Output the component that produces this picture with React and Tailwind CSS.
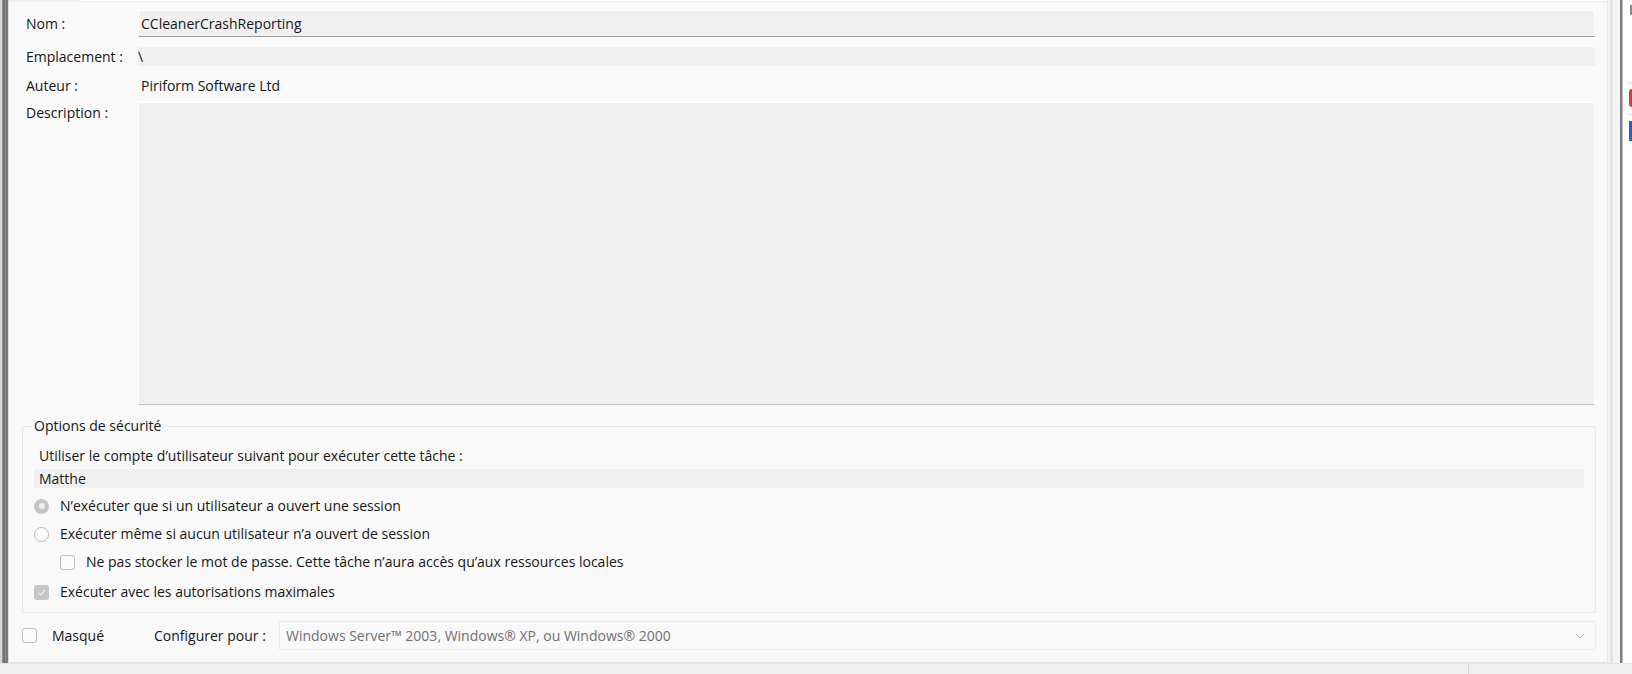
import React from 'react';

function Field({ children, className = '' }) {
  return (
    <div className={`flex items-center bg-[#f0f0f0] ${className}`}>{children}</div>
  );
}

function Radio({ checked }) {
  if (checked) {
    return (
      <span className="flex h-[15px] w-[15px] shrink-0 items-center justify-center rounded-full bg-[#c5c5c5]">
        <span className="h-[6px] w-[6px] rounded-full bg-[#efefef]" />
      </span>
    );
  }
  return <span className="h-[15px] w-[15px] shrink-0 rounded-full border border-[#b9b9b9] bg-[#fbfbfb]" />;
}

function Check({ checked }) {
  if (checked) {
    return (
      <span className="flex h-[15px] w-[15px] shrink-0 items-center justify-center rounded-[3px] bg-[#c6c6c6]">
        <svg width="9" height="9" viewBox="0 0 10 10" fill="none">
          <path d="M1.5 5.2 L4 7.6 L8.6 2.6" stroke="#eeeeee" strokeWidth="1.2" strokeLinecap="round" strokeLinejoin="round" />
        </svg>
      </span>
    );
  }
  return <span className="h-[15px] w-[15px] shrink-0 rounded-[3px] border border-[#bdbdbd] bg-[#fbfbfb]" />;
}

export default function App() {
  return (
    <div className="flex h-[674px] w-[1632px] flex-col overflow-hidden bg-[#f0f0f0] font-['Open_Sans','Noto_Sans',sans-serif] text-[14px] leading-[20px] text-[#161616]">
      <div className="flex h-[663px]">
        {/* left window edge */}
        <div className="flex w-[9px] shrink-0">
          <div className="w-[2px] bg-[#d4d4d4]" />
          <div className="w-[1px] bg-[#9a9a9a]" />
          <div className="w-[2px] bg-[#6f6f6f]" />
          <div className="w-[1px] bg-[#8c8c8c]" />
          <div className="w-[2px] bg-[#767676]" />
          <div className="w-[1px] bg-[#dcdcdc]" />
        </div>

        {/* general tab */}
        <div className="flex w-[1598px] shrink-0 flex-col border-b border-[#e2e2e2] bg-[#f9f9f9]">
          <div className="flex h-[2px]">
            <div className="w-[71px] bg-[#f1f1f1]" />
            <div className="flex-1 border-b border-[#ececec] bg-[#fdfdfd]" />
          </div>

          <div className="flex flex-col pl-[17px] pr-[12px]">
            <div className="mt-[8px] flex h-[27px] items-center">
              <span className="w-[112px] shrink-0">Nom :</span>
              <Field className="h-[27px] flex-1 border border-b-[#9a9a9a] border-x-white border-t-white pl-[2px]">
                CCleanerCrashReporting
              </Field>
            </div>
            <div className="mt-[10px] flex h-[19px] items-center">
              <span className="w-[112px] shrink-0">Emplacement :</span>
              <Field className="h-[19px] flex-1">\</Field>
            </div>
            <div className="mt-[10px] flex h-[20px] items-center">
              <span className="w-[115px] shrink-0">Auteur :</span>
              <span>Piriform Software Ltd</span>
            </div>
            <div className="mt-[6px] flex">
              <span className="w-[112px] shrink-0 pt-[1px]">Description :</span>
              <div className="h-[303px] flex-1 border border-b-[#c4c4c4] border-x-white border-t-white bg-[#f0f0f0]" />
            </div>
          </div>

          <fieldset className="ml-[13px] mr-[11px] mt-[11px] flex flex-col rounded-[2px] border border-[#e6e6e6] pb-[10px] pl-[11px] pr-[11px]">
            <legend className="-ml-[3px] px-[3px]">Options de sécurité</legend>
            <span className="mt-[10px] pl-[5px]">Utiliser le compte d’utilisateur suivant pour exécuter cette tâche :</span>
            <Field className="mt-[3px] h-[19px] pl-[5px]">Matthe</Field>
            <label className="mt-[8px] flex h-[20px] items-center gap-[11px]">
              <Radio checked />
              <span>N’exécuter que si un utilisateur a ouvert une session</span>
            </label>
            <label className="mt-[8px] flex h-[20px] items-center gap-[11px]">
              <Radio />
              <span>Exécuter même si aucun utilisateur n’a ouvert de session</span>
            </label>
            <label className="ml-[26px] mt-[8px] flex h-[20px] items-center gap-[11px]">
              <Check />
              <span>Ne pas stocker le mot de passe. Cette tâche n’aura accès qu’aux ressources locales</span>
            </label>
            <label className="mt-[10px] flex h-[20px] items-center gap-[11px]">
              <Check checked />
              <span>Exécuter avec les autorisations maximales</span>
            </label>
          </fieldset>

          <div className="ml-[13px] mr-[11px] mt-[8px] flex h-[29px] items-center">
            <Check />
            <span className="ml-[15px] w-[102px] font-medium">Masqué</span>
            <span className="w-[125px] font-medium">Configurer pour :</span>
            <div className="flex h-[29px] flex-1 items-center justify-between border border-[#ececec] bg-[#f9f9f9] pl-[6px] pr-[10px] text-[#707070]">
              <span>Windows Server™ 2003, Windows® XP, ou Windows® 2000</span>
              <svg width="10" height="6" viewBox="0 0 10 6" fill="none">
                <path d="M1 1 L5 5 L9 1" stroke="#b5b5b5" strokeWidth="1" />
              </svg>
            </div>
          </div>
          <div className="flex-1" />
        </div>

        {/* right edge, neighbouring window */}
        <div className="flex flex-1">
          <div className="w-[1px] bg-[#e8e8e8]" />
          <div className="w-[2px] bg-[#f4f4f4]" />
          <div className="w-[3px] bg-[#e4e4e4]" />
          <div className="w-[7px] bg-[#f3f3f3]" />
          <div className="w-[2px] bg-[#7e7e7e]" />
          <div className="w-[1px] bg-[#b8b8b8]" />
          <div className="flex flex-1 flex-col bg-white pl-[5px]">
            <div className="ml-[2px] mt-[5px] h-[10px] w-[2px] bg-[#8a8a8a]" />
            <div className="mt-[68px] h-[1px] bg-[#dcdcdc]" />
            <div className="ml-[1px] mt-[5px] h-[18px] w-[3px] rounded-l-full bg-[#d83b3b]" />
            <div className="mt-[7px] h-[1px] bg-[#dcdcdc]" />
            <div className="ml-[1px] mt-[6px] h-[20px] w-[3px] bg-[#2f5bd0]" />
          </div>
        </div>
      </div>

      {/* status bar */}
      <div className="flex h-[11px] border-t border-[#e4e4e4] bg-[#f0f0f0]">
        <div className="w-[1469px] border-r border-[#d6d6d6]" />
      </div>
    </div>
  );
}
